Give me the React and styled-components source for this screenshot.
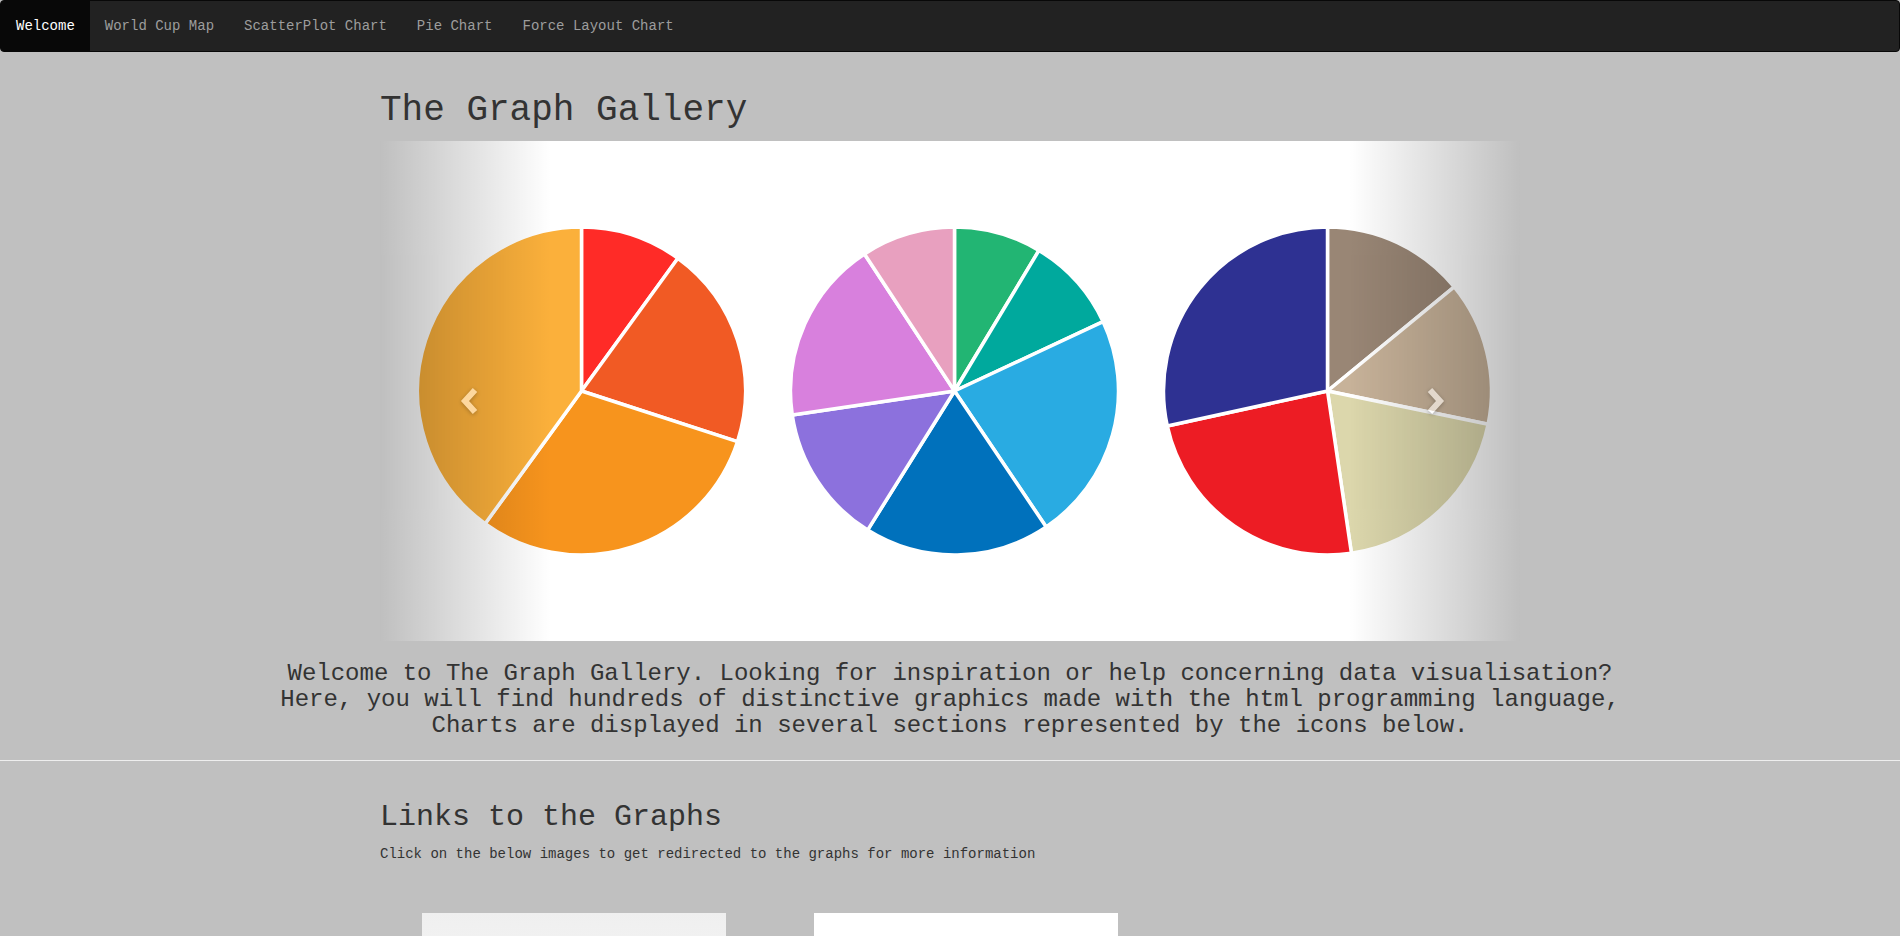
import React from "react";
import styled, { createGlobalStyle } from "styled-components";

const GlobalStyle = createGlobalStyle`
  html, body {
    margin: 0;
    padding: 0;
  }
  body {
    background: #c0c0c0;
    color: #333;
    font-family: "Liberation Mono", "DejaVu Sans Mono", monospace;
    font-size: 14px;
    line-height: 20px;
  }
`;

const Navbar = styled.nav`
  display: flex;
  min-height: 50px;
  background: #222;
  border: 1px solid #080808;
  border-radius: 4px;
  overflow: hidden;
  margin-bottom: 19px;
`;

const NavItem = styled.a`
  display: block;
  padding: 15px;
  line-height: 20px;
  font-size: 14px;
  text-decoration: none;
  color: ${(p) => (p.$active ? "#fff" : "#9d9d9d")};
  background: ${(p) => (p.$active ? "#080808" : "transparent")};
`;

const Container = styled.div`
  display: flow-root;
  width: 1140px;
  margin: 0 auto;
`;

const Title = styled.h1`
  font-size: 36px;
  font-weight: 400;
  line-height: 39.6px;
  margin: 20px 0 10px;
  color: #333;
`;

const Carousel = styled.div`
  position: relative;
  height: 500px;
  background: #fff;
  overflow: hidden;
`;

const Control = styled.div`
  position: absolute;
  top: 0;
  bottom: 0;
  ${(p) => (p.$side === "left" ? "left: 0;" : "right: 0;")}
  width: 15%;
  opacity: 0.5;
  display: flex;
  align-items: center;
  justify-content: center;
  background-image: linear-gradient(
    ${(p) => (p.$side === "left" ? "to right" : "to left")},
    rgba(0, 0, 0, 0.5) 0,
    rgba(0, 0, 0, 0.0001) 100%
  );
  & > svg {
    margin-top: 20px;
    margin-left: ${(p) => (p.$side === "left" ? "8px" : "0")};
    filter: drop-shadow(0 1px 2px rgba(0, 0, 0, 0.6));
  }
`;

const Lead = styled.h3`
  font-size: 24px;
  font-weight: 400;
  line-height: 26.4px;
  text-align: center;
  margin: 20px 0 10px;
  color: #333;
`;

const Rule = styled.hr`
  border: 0;
  border-top: 1px solid #eee;
  margin: 20px 0;
`;

const SectionTitle = styled.h2`
  font-size: 30px;
  font-weight: 400;
  line-height: 33px;
  margin: 20px 0 10px;
  color: #333;
`;

const Note = styled.p`
  margin: 0 0 10px;
  font-size: 14px;
`;

const Gallery = styled.div`
  display: flex;
  gap: 88px;
  padding: 39px 0 40px 42px;
`;

const Thumb = styled.div`
  width: 304px;
  height: 250px;
  background: ${(p) => (p.$shaded ? "linear-gradient(#efefef, #fbfbfb 60%)" : "#fff")};
`;

const pies = [
  {
    cx: 201.5,
    stops: [36, 108, 216, 360],
    colors: ["#ff2b27", "#f15a24", "#f7941d", "#fbb03b"],
  },
  {
    cx: 574.5,
    stops: [31, 65, 146, 212, 261.6, 326.7, 360],
    colors: ["#22b573", "#00a99d", "#29abe2", "#0071bc", "#8c71dd", "#d880dd", "#e8a0bf"],
  },
  {
    cx: 947.5,
    stops: [50.6, 101.7, 171.6, 257.7, 360],
    colors: ["#998675", "#c7b299", "#dcd7ac", "#ed1c24", "#2e3192"],
  },
];

const wedge = (cx, cy, r, a0, a1) => {
  const rad = (a) => (a * Math.PI) / 180;
  const x0 = cx + r * Math.sin(rad(a0));
  const y0 = cy - r * Math.cos(rad(a0));
  const x1 = cx + r * Math.sin(rad(a1));
  const y1 = cy - r * Math.cos(rad(a1));
  const large = a1 - a0 > 180 ? 1 : 0;
  return `M${cx},${cy} L${x0},${y0} A${r},${r} 0 ${large} 1 ${x1},${y1} Z`;
};

const PieStrip = () => (
  <svg width="1140" height="500" viewBox="0 0 1140 500">
    {pies.map((pie, i) =>
      pie.stops.map((end, j) => (
        <path
          key={`${i}-${j}`}
          d={wedge(pie.cx, 250, 164, j === 0 ? 0 : pie.stops[j - 1], end)}
          fill={pie.colors[j]}
          stroke="#fff"
          strokeWidth="3.5"
          strokeLinejoin="round"
        />
      ))
    )}
  </svg>
);

const Chevron = ({ dir }) => (
  <svg width="20" height="28" viewBox="0 0 20 28">
    <polyline
      points={dir === "left" ? "15,3 5,14 15,25" : "5,3 15,14 5,25"}
      fill="none"
      stroke="#fff"
      strokeWidth="6"
    />
  </svg>
);

const links = ["Welcome", "World Cup Map", "ScatterPlot Chart", "Pie Chart", "Force Layout Chart"];

const App = () => {
  return (
    <>
      <GlobalStyle />
      <Navbar>
        {links.map((label, i) => (
          <NavItem key={label} href="#" $active={i === 0}>
            {label}
          </NavItem>
        ))}
      </Navbar>
      <Container>
        <Title>The Graph Gallery</Title>
        <Carousel>
          <PieStrip />
          <Control $side="left">
            <Chevron dir="left" />
          </Control>
          <Control $side="right">
            <Chevron dir="right" />
          </Control>
        </Carousel>
      </Container>
      <Lead>
        Welcome to The Graph Gallery. Looking for inspiration or help concerning data visualisation?
        <br />
        Here, you will find hundreds of distinctive graphics made with the html programming language,
        <br />
        Charts are displayed in several sections represented by the icons below.
      </Lead>
      <Rule />
      <Container>
        <SectionTitle>Links to the Graphs</SectionTitle>
        <Note>Click on the below images to get redirected to the graphs for more information</Note>
        <Gallery>
          <Thumb $shaded />
          <Thumb />
        </Gallery>
      </Container>
    </>
  );
};

export default App;
